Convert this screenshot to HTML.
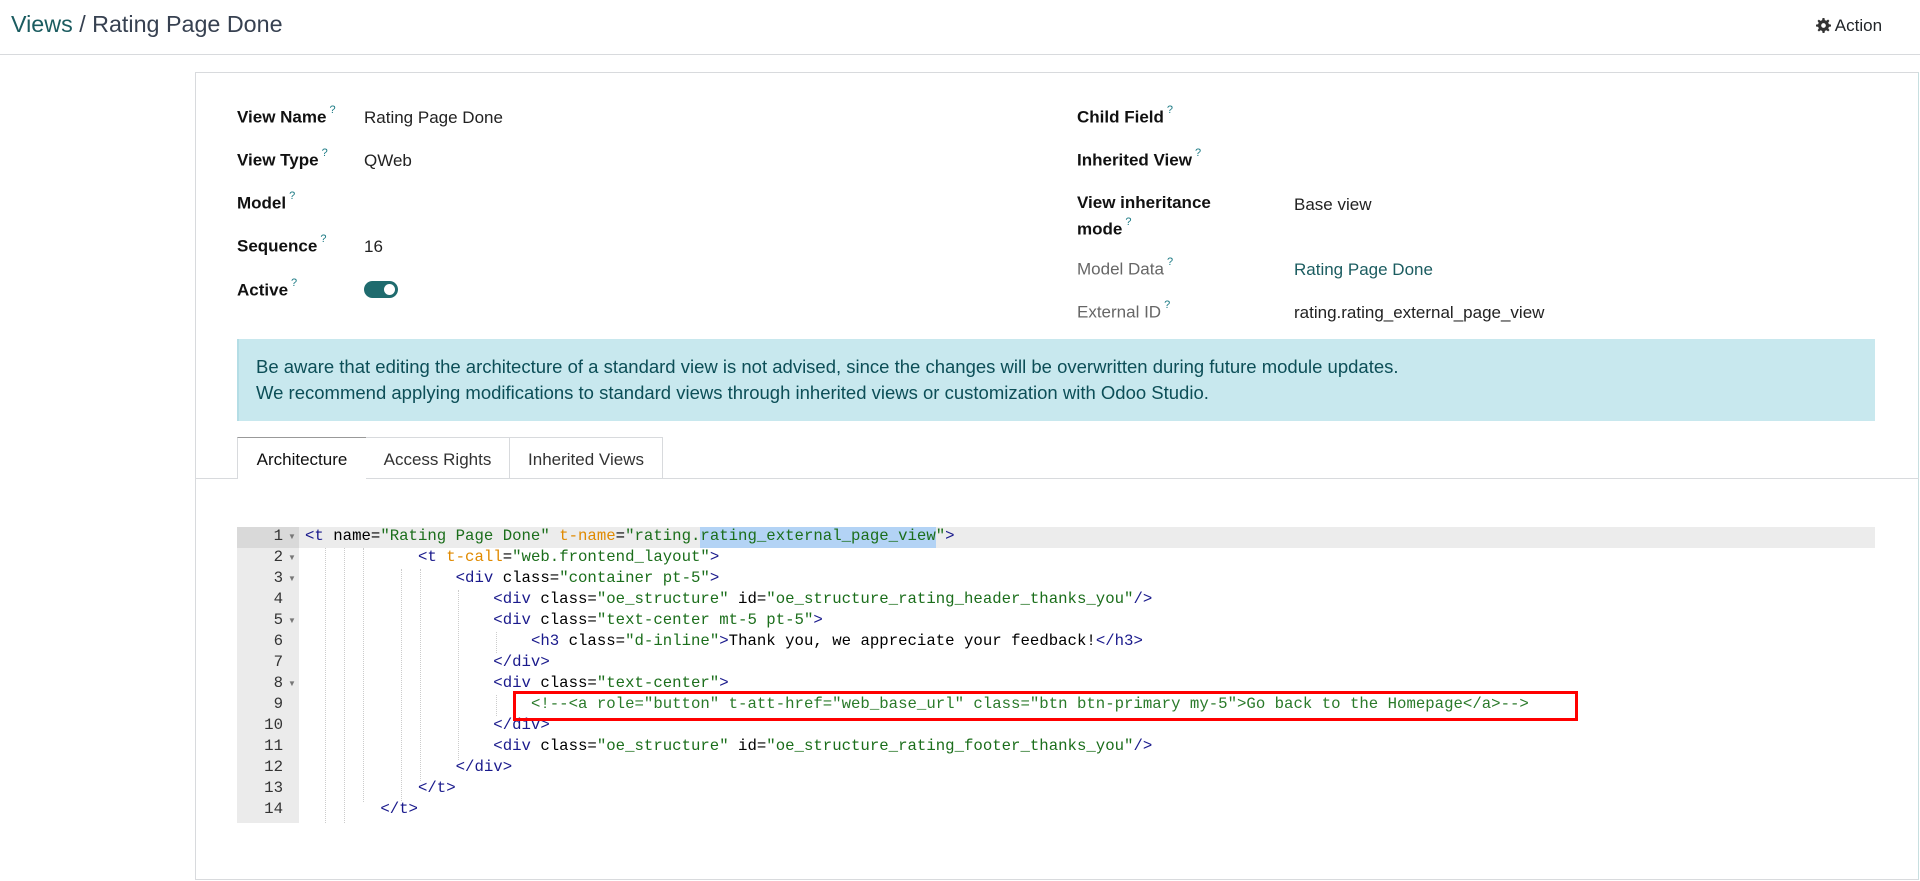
<!DOCTYPE html>
<html><head><meta charset="utf-8">
<style>
*{margin:0;padding:0;box-sizing:border-box}
body{width:1920px;height:881px;background:#fff;font-family:"Liberation Sans",sans-serif;color:#212529;position:relative;overflow:hidden}
.abs{position:absolute;white-space:nowrap}
.hdr{position:absolute;left:0;top:0;width:1920px;height:55px;border-bottom:1px solid #d8dadd;background:#fff}
.title{left:11px;top:11px;font-size:23.3px;color:#374151}
.title .v{color:#1b5c60}
.action{left:1816px;top:16px;font-size:17px;color:#212529}
.card{position:absolute;left:195px;top:72px;width:1724px;height:808px;border:1px solid #d8dadd;border-right:1px solid #c8dfe0;background:#fff}
.lbl{font-size:17px;font-weight:bold;color:#111}
.lbl sup,.lg sup{color:#1b7a84;font-size:11px;font-weight:normal;position:relative;top:-3px;margin-left:3px}
.lg{font-size:17px;color:#666}
.val{font-size:17px;color:#222}
.alert{position:absolute;left:237px;top:339px;width:1638px;height:82px;background:#c8e8ee;border-left:2px solid #b4dde5;color:#0c4e57;font-size:18.5px;line-height:26px;padding:15px 0 0 17px}
.tabline{position:absolute;left:196px;top:478px;width:1723px;height:1px;background:#d8dadd}
.tab{position:absolute;top:437px;height:42px;border:1px solid #d8dadd;font-size:17px;padding-top:12px;text-align:center;background:#fff;color:#333}
.tab.act{border-top:1px solid #999;border-bottom:none;color:#111;height:42px}
.gutter{position:absolute;left:237px;top:527px;width:62px;height:296px;background:#ebebeb}
.ln{position:absolute;left:237px;width:46px;text-align:right;font-family:"Liberation Mono",monospace;font-size:15.7px;color:#333}
.fold{position:absolute;left:288px;font-size:8px;color:#777}
.code{position:absolute;left:305px;font-family:"Liberation Mono",monospace;font-size:15.7px;color:#000;white-space:pre}
.t{color:#1a1a8c}.s{color:#1b6e1b}.o{color:#e08a00}.c{color:#2a7a2a}
.guide{position:absolute;width:0;border-left:1px dotted #ccc}
</style></head><body>
<div class="hdr"></div>
<div class="abs title"><span class="v">Views</span> / Rating Page Done</div>
<div class="abs action"><svg width="15" height="15" viewBox="0 0 16 16" style="vertical-align:-2px"><path fill="#333" d="M7 0h2l.4 2.2 1.6.7 1.9-1.3 1.4 1.4-1.3 1.9.7 1.6L16 7v2l-2.2.4-.7 1.6 1.3 1.9-1.4 1.4-1.9-1.3-1.6.7L9 16H7l-.4-2.2-1.6-.7-1.9 1.3-1.4-1.4 1.3-1.9-.7-1.6L0 9V7l2.2-.4.7-1.6-1.3-1.9 1.4-1.4 1.9 1.3 1.6-.7z"/><circle cx="8" cy="8" r="2.5" fill="#fff"/></svg> Action</div>
<div class="card"></div>

<div class="abs lbl" style="left:237px;top:107px">View Name<sup>?</sup></div>
<div class="abs val" style="left:364px;top:108px">Rating Page Done</div>
<div class="abs lbl" style="left:237px;top:150px">View Type<sup>?</sup></div>
<div class="abs val" style="left:364px;top:151px">QWeb</div>
<div class="abs lbl" style="left:237px;top:193px">Model<sup>?</sup></div>
<div class="abs lbl" style="left:237px;top:236px">Sequence<sup>?</sup></div>
<div class="abs val" style="left:364px;top:237px">16</div>
<div class="abs lbl" style="left:237px;top:280px">Active<sup>?</sup></div>
<div class="abs" style="left:364px;top:281px;width:34px;height:17px;border-radius:9px;background:#1f6b6e"><div style="position:absolute;right:3px;top:3px;width:11px;height:11px;border-radius:50%;background:#fff"></div></div>

<div class="abs lbl" style="left:1077px;top:107px">Child Field<sup>?</sup></div>
<div class="abs lbl" style="left:1077px;top:150px">Inherited View<sup>?</sup></div>
<div class="abs lbl" style="left:1077px;top:193px">View inheritance</div>
<div class="abs lbl" style="left:1077px;top:219px">mode<sup>?</sup></div>
<div class="abs val" style="left:1294px;top:195px">Base view</div>
<div class="abs lg" style="left:1077px;top:259px">Model Data<sup>?</sup></div>
<div class="abs val" style="left:1294px;top:260px;color:#1b5c60">Rating Page Done</div>
<div class="abs lg" style="left:1077px;top:302px">External ID<sup>?</sup></div>
<div class="abs val" style="left:1294px;top:303px">rating.rating_external_page_view</div>

<div class="alert">Be aware that editing the architecture of a standard view is not advised, since the changes will be overwritten during future module updates.<br>We recommend applying modifications to standard views through inherited views or customization with Odoo Studio.</div>

<div class="tabline"></div>
<div class="tab act" style="left:237px;width:130px">Architecture</div>
<div class="tab" style="left:366px;width:144px;border-left:none">Access Rights</div>
<div class="tab" style="left:509px;width:154px">Inherited Views</div>

<div class="gutter"></div>
<div class="abs" style="left:299px;top:527px;width:1576px;height:21px;background:#ececec"></div>
<div class="abs" style="left:700px;top:527px;width:236px;height:21px;background:#b3d3f5"></div>
<div class="abs" style="left:237px;top:527px;width:62px;height:21px;background:#d9d9d9"></div>

<div class="guide" style="left:325px;top:548px;height:275px"></div>
<div class="guide" style="left:344px;top:548px;height:275px"></div>
<div class="guide" style="left:363px;top:548px;height:254px"></div>
<div class="guide" style="left:401px;top:569px;height:232px"></div>
<div class="guide" style="left:420px;top:569px;height:212px"></div>
<div class="guide" style="left:458px;top:590px;height:170px"></div>
<div class="guide" style="left:496px;top:632px;height:21px"></div>
<div class="guide" style="left:496px;top:695px;height:21px"></div>

<div class="ln" style="top:527px">1</div><div class="fold" style="top:532px">▼</div>
<div class="ln" style="top:548px">2</div><div class="fold" style="top:553px">▼</div>
<div class="ln" style="top:569px">3</div><div class="fold" style="top:574px">▼</div>
<div class="ln" style="top:590px">4</div>
<div class="ln" style="top:611px">5</div><div class="fold" style="top:616px">▼</div>
<div class="ln" style="top:632px">6</div>
<div class="ln" style="top:653px">7</div>
<div class="ln" style="top:674px">8</div><div class="fold" style="top:679px">▼</div>
<div class="ln" style="top:695px">9</div>
<div class="ln" style="top:716px">10</div>
<div class="ln" style="top:737px">11</div>
<div class="ln" style="top:758px">12</div>
<div class="ln" style="top:779px">13</div>
<div class="ln" style="top:800px">14</div>

<div class="code" style="top:527px"><span class="t">&lt;t</span> name=<span class="s">"Rating Page Done"</span> <span class="o">t-name</span>=<span class="s">"rating.rating_external_page_view"</span><span class="t">&gt;</span></div>
<div class="code" style="top:548px">            <span class="t">&lt;t</span> <span class="o">t-call</span>=<span class="s">"web.frontend_layout"</span><span class="t">&gt;</span></div>
<div class="code" style="top:569px">                <span class="t">&lt;div</span> class=<span class="s">"container pt-5"</span><span class="t">&gt;</span></div>
<div class="code" style="top:590px">                    <span class="t">&lt;div</span> class=<span class="s">"oe_structure"</span> id=<span class="s">"oe_structure_rating_header_thanks_you"</span><span class="t">/&gt;</span></div>
<div class="code" style="top:611px">                    <span class="t">&lt;div</span> class=<span class="s">"text-center mt-5 pt-5"</span><span class="t">&gt;</span></div>
<div class="code" style="top:632px">                        <span class="t">&lt;h3</span> class=<span class="s">"d-inline"</span><span class="t">&gt;</span>Thank you, we appreciate your feedback!<span class="t">&lt;/h3&gt;</span></div>
<div class="code" style="top:653px">                    <span class="t">&lt;/div&gt;</span></div>
<div class="code" style="top:674px">                    <span class="t">&lt;div</span> class=<span class="s">"text-center"</span><span class="t">&gt;</span></div>
<div class="code" style="top:695px">                        <span class="c">&lt;!--&lt;a role="button" t-att-href="web_base_url" class="btn btn-primary my-5"&gt;Go back to the Homepage&lt;/a&gt;--&gt;</span></div>
<div class="code" style="top:716px">                    <span class="t">&lt;/div&gt;</span></div>
<div class="code" style="top:737px">                    <span class="t">&lt;div</span> class=<span class="s">"oe_structure"</span> id=<span class="s">"oe_structure_rating_footer_thanks_you"</span><span class="t">/&gt;</span></div>
<div class="code" style="top:758px">                <span class="t">&lt;/div&gt;</span></div>
<div class="code" style="top:779px">            <span class="t">&lt;/t&gt;</span></div>
<div class="code" style="top:800px">        <span class="t">&lt;/t&gt;</span></div>

<div class="abs" style="left:513px;top:691px;width:1065px;height:30px;border:3px solid #f00"></div>
</body></html>
